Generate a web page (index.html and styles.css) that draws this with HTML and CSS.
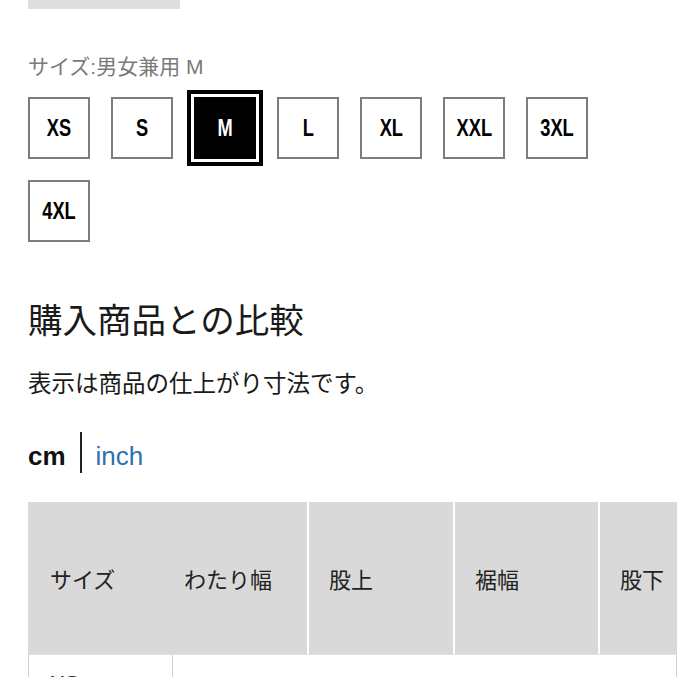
FILE: index.html
```html
<!DOCTYPE html>
<html lang="ja">
  <head>
    <meta charset="UTF-8" />
    <meta name="viewport" content="width=device-width, initial-scale=1.0" />
    <title>サイズ比較</title>
    <link rel="stylesheet" href="styles.css">
  </head>
  <body>
    <!-- 商品画像の下端 -->
    <div class="photo-edge"></div>

    <div class="size-label">サイズ:男女兼用 M</div>

    <div class="size-list">
      <button class="size-btn"><span>XS</span></button>
      <button class="size-btn"><span>S</span></button>
      <button class="size-btn selected"><span>M</span></button>
      <button class="size-btn"><span>L</span></button>
      <button class="size-btn"><span>XL</span></button>
      <button class="size-btn"><span>XXL</span></button>
      <button class="size-btn"><span>3XL</span></button>
      <button class="size-btn"><span>4XL</span></button>
    </div>

    <h2 class="compare-title">購入商品との比較</h2>
    <p class="compare-note">表示は商品の仕上がり寸法です。</p>

    <div class="unit-switch">
      <span class="unit active">cm</span>
      <span class="unit-divider"></span>
      <a class="unit" href="#">inch</a>
    </div>

    <div class="table-wrap">
      <table class="size-table">
        <colgroup>
          <col style="width: 145px" />
          <col style="width: 134px" />
          <col style="width: 146px" />
          <col style="width: 145px" />
          <col style="width: 79px" />
        </colgroup>
        <thead>
          <tr>
            <th class="col-size">サイズ</th>
            <th class="col-first">わたり幅</th>
            <th>股上</th>
            <th>裾幅</th>
            <th>股下</th>
          </tr>
        </thead>
        <tbody>
          <tr>
            <td class="col-size">XS</td>
            <td colspan="4"></td>
          </tr>
        </tbody>
      </table>
    </div>
  </body>
</html>
```

FILE: styles.css
```css
body {
  margin: 0;
  padding: 0 28px;
  overflow: hidden;
  background: #fff;
  color: #1b1b1b;
  font-family: "Liberation Sans", "Noto Sans CJK JP", sans-serif;
}

.photo-edge {
  width: 152px;
  height: 9px;
  background: #dedede;
}

.size-label {
  margin-top: 44px;
  font-size: 21px;
  line-height: 28px;
  color: #7a7a7a;
}

.size-list {
  display: flex;
  flex-wrap: wrap;
  gap: 21px;
  margin-top: 16px;
}

.size-btn {
  width: 62px;
  height: 62px;
  padding: 0;
  border: 2px solid #7d7d7d;
  background: #fff;
  color: #000;
  font-family: "Liberation Sans", sans-serif;
  font-weight: bold;
  font-size: 24px;
  cursor: pointer;
}

/* 細めの書体に見せる */
.size-btn span {
  display: inline-block;
  transform: scaleX(0.76);
}

.size-btn.selected {
  background: #000;
  border-color: #000;
  color: #fff;
  outline: 4px solid #000;
  outline-offset: 3px;
}

.compare-title {
  margin: 55px 0 0;
  font-size: 34.5px;
  line-height: 48px;
  font-weight: normal;
  color: #1a1a1a;
}

.compare-note {
  margin: 23px 0 0;
  font-size: 23.5px;
  line-height: 32px;
  color: #1a1a1a;
}

.unit-switch {
  display: flex;
  align-items: center;
  height: 41px;
  margin-top: 32px;
  font-size: 26px;
}

.unit {
  line-height: 41px;
  padding-top: 4px;
  box-sizing: border-box;
  height: 41px;
}

.unit.active {
  font-weight: bold;
  color: #111;
}

a.unit {
  color: #3170ad;
  text-decoration: none;
}

.unit-divider {
  width: 2px;
  height: 41px;
  margin: 0 14px 0 14px;
  background: #222;
}

.table-wrap {
  margin-top: 29px;
  margin-right: -28px;
  overflow: hidden;
}

.size-table {
  border-collapse: separate;
  border-spacing: 0;
  table-layout: fixed;
  width: 649px;
  font-size: 22px;
  color: #222;
  font-family: "Noto Sans CJK JP", sans-serif;
}

.size-table th {
  height: 152px;
  padding: 0 0 0 20px;
  background: #d9d9d9;
  border-left: 2px solid #fff;
  font-weight: normal;
  text-align: left;
  white-space: nowrap;
}

.size-table th.col-size {
  padding-left: 22px;
  border-left: none;
}

.size-table th.col-first {
  padding-left: 11px;
  border-left: none;
}

.size-table td {
  height: 60px;
  padding: 14px 0 0 21px;
  vertical-align: top;
  border-top: 1px solid #e2e2e2;
  border-right: 1px solid #cfcfcf;
  font-family: "Liberation Sans", sans-serif;
  line-height: 30px;
}

.size-table td.col-size {
  border-left: 1px solid #cfcfcf;
}
```
